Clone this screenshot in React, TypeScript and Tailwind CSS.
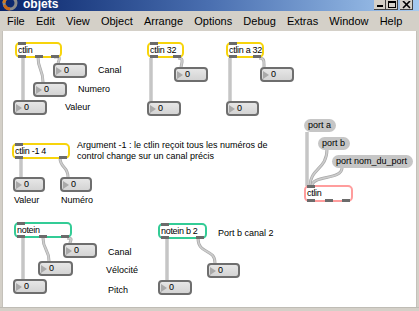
import React from 'react'

// canvas origin in page coordinates
const CX = 3
const CY = 31

const at = (x: number, y: number) => ({ left: x - CX, top: y - CY })

interface ObjProps {
  x: number
  y: number
  w: number
  h?: number
  text: string
  border: string
  outlets: number
}

function ObjBox({ x, y, w, h = 16, text, border, outlets }: ObjProps) {
  const outs = Array.from({ length: outlets }, (_, i) =>
    outlets === 1 ? 3 : 3 + (i * (w - 14)) / (outlets - 1)
  )
  return (
    <div
      className={`absolute flex items-center whitespace-nowrap rounded-[5px] border-2 bg-white pl-[1px] text-[9px] leading-none tracking-[-0.3px] text-black ${border}`}
      style={{ ...at(x, y), width: w, height: h }}
    >
      <span className="absolute left-[1px] top-[-2px] h-[3px] w-[8px] bg-[#6b6b6b]" />
      {outs.map((l, i) => (
        <span
          key={i}
          className="absolute bottom-[-2px] h-[3px] w-[8px] bg-[#6b6b6b]"
          style={{ left: l - 2 }}
        />
      ))}
      <span className="relative">{text}</span>
    </div>
  )
}

function NumBox({ x, y, w = 34 }: { x: number; y: number; w?: number }) {
  return (
    <div
      className="absolute flex items-center rounded-[4px] border-2 border-[#6e6e6e] bg-gradient-to-b from-[#e6e6e6] to-[#d4d4d4] text-[9px] leading-none text-black"
      style={{ ...at(x, y), width: w, height: 15 }}
    >
      <span className="ml-[1px] h-0 w-0 border-y-[4px] border-l-[6px] border-y-transparent border-l-[#a9a9a9]" />
      <span className="ml-[2px]">0</span>
    </div>
  )
}

function Msg({ x, y, w, text }: { x: number; y: number; w: number; text: string }) {
  return (
    <div
      className="absolute flex items-center whitespace-nowrap rounded-full bg-[#c6c6c6] pl-[4px] text-[9px] leading-none text-black"
      style={{ ...at(x, y), width: w, height: 13 }}
    >
      {text}
    </div>
  )
}

function Label({ x, y, text }: { x: number; y: number; text: string }) {
  return (
    <div className="absolute whitespace-nowrap text-[9px] leading-[11px] text-black" style={at(x, y)}>
      {text}
    </div>
  )
}

const cords = [
  // ctlin
  'M23 57 L23 100',
  'M38 57 C38 70 43 69 43 82',
  'M54 57 C62 56 59 60 58 63',
  // ctlin 32
  'M151 58 L151 101',
  'M178 58 C184 58 182 62 181 67',
  // ctlin a 32
  'M230 58 L230 101',
  'M259 58 C265 58 264 62 264 67',
  // ctlin -1 4
  'M21 158 L21 177',
  'M60 158 C60 168 68 166 68 177',
  // notein
  'M23 238 L23 279',
  'M43 238 C43 250 49 249 49 261',
  'M67 238 C74 238 70 241 70 243',
  // notein b 2
  'M167 238 L167 280',
  'M198 238 C198 255 215 248 215 263',
  // ports
  'M307 132 L307 186',
  'M327 149 C327 170 310 168 310 186',
  'M342 168 C342 180 312 175 312 186',
]

const menu = ['File', 'Edit', 'View', 'Object', 'Arrange', 'Options', 'Debug', 'Extras', 'Window', 'Help']

export default function App() {
  return (
    <div
      className="flex h-[311px] w-[419px] flex-col overflow-hidden bg-[#d4d0c8]"
      style={{ fontFamily: '"Liberation Sans", Arial, sans-serif' }}
    >
      {/* title bar, cropped at the top */}
      <div className="relative flex h-[11px] shrink-0 items-end bg-gradient-to-r from-[#0a246a] via-[#4a6fb0] to-[#a6caf0]">
        <svg className="absolute left-0 top-[-5px]" width="20" height="16" viewBox="0 0 20 16">
          <circle cx="10" cy="8" r="6" fill="none" stroke="#8a8a8a" strokeWidth="3" />
          <path d="M4 8 A6 6 0 0 1 7 3" fill="none" stroke="#d07a20" strokeWidth="3" />
          <path d="M10 14 A6 6 0 0 1 4.5 10" fill="none" stroke="#c86818" strokeWidth="3" />
        </svg>
        <span className="absolute left-[23px] top-[-1px] text-[12px] font-bold leading-[11px] text-white">objets</span>
        <div className="absolute right-[6px] top-0 flex h-[10px]">
          <div className="relative h-[10px] w-[12px] border-b border-r border-b-[#404040] border-r-[#404040] bg-[#d4d0c8]">
            <span className="absolute bottom-[2px] left-[3px] h-[2px] w-[6px] bg-black" />
          </div>
          <div className="relative h-[10px] w-[12px] border-b border-r border-b-[#404040] border-r-[#404040] bg-[#d4d0c8]">
            <span className="absolute bottom-[1px] left-[2px] h-[7px] w-[8px] border border-t-2 border-black" />
          </div>
          <div className="relative ml-[2px] flex h-[10px] w-[13px] items-end justify-center border-b border-r border-b-[#404040] border-r-[#404040] bg-[#d4d0c8]">
            <svg width="9" height="8" viewBox="0 0 9 8">
              <path d="M1 0 L8 7 M8 0 L1 7" stroke="black" strokeWidth="1.6" />
            </svg>
          </div>
        </div>
      </div>

      {/* menu bar */}
      <div className="flex h-[20px] shrink-0 items-center gap-[11.2px] pl-[7px] text-[11px] leading-none text-black">
        {menu.map((m) => (
          <span key={m}>{m}</span>
        ))}
      </div>

      {/* patcher canvas */}
      <div className="flex min-h-0 flex-1">
        <div className="w-[3px] border-r border-[#c4c1ba]" />
        <div className="relative flex-1 overflow-hidden bg-white">
          <svg className="absolute inset-0" width="413" height="276" viewBox="3 31 413 276">
            {cords.map((d, i) => (
              <g key={i}>
                <path d={d} fill="none" stroke="#a9a9a9" strokeWidth="3" />
                <path d={d} fill="none" stroke="#cdcdcd" strokeWidth="1.6" />
              </g>
            ))}
          </svg>

          {/* ctlin */}
          <ObjBox x={15} y={42} w={47} text="ctlin" border="border-[#f7d40c]" outlets={3} />
          <NumBox x={53} y={63} />
          <Label x={98} y={65} text="Canal" />
          <NumBox x={33} y={82} />
          <Label x={78} y={84} text="Numero" />
          <NumBox x={13} y={100} />
          <Label x={65} y={102} text="Valeur" />

          {/* ctlin 32 */}
          <ObjBox x={147} y={42} w={37} text="ctlin 32" border="border-[#f7d40c]" outlets={2} />
          <NumBox x={174} y={67} />
          <NumBox x={147} y={101} />

          {/* ctlin a 32 */}
          <ObjBox x={226} y={42} w={38} text="ctlin a 32" border="border-[#f7d40c]" outlets={2} />
          <NumBox x={260} y={67} />
          <NumBox x={226} y={101} w={33} />

          {/* ctlin -1 4 */}
          <ObjBox x={12} y={143} w={58} text="ctlin -1 4" border="border-[#f7d40c]" outlets={2} />
          <div className="absolute whitespace-nowrap text-[9px] leading-[11px] text-black" style={at(77, 140)}>
            Argument -1 : le ctlin reçoit tous les numéros de
            <br />
            control change sur un canal précis
          </div>
          <NumBox x={13} y={177} w={32} />
          <NumBox x={60} y={177} w={32} />
          <Label x={14} y={195} text="Valeur" />
          <Label x={61} y={195} text="Numéro" />

          {/* ports */}
          <Msg x={304} y={119} w={32} text="port a" />
          <Msg x={318} y={137} w={32} text="port b" />
          <Msg x={332} y={155} w={81} text="port nom_du_port" />
          <ObjBox x={304} y={185} w={49} h={17} text="ctlin" border="border-[#ff9d9d]" outlets={3} />

          {/* notein */}
          <ObjBox x={14} y={222} w={58} text="notein" border="border-[#33cc96]" outlets={3} />
          <NumBox x={63} y={243} />
          <Label x={108} y={247} text="Canal" />
          <NumBox x={38} y={261} w={35} />
          <Label x={106} y={265} text="Vélocité" />
          <NumBox x={13} y={279} />
          <Label x={108} y={285} text="Pitch" />

          {/* notein b 2 */}
          <ObjBox x={158} y={223} w={49} text="notein b 2" border="border-[#33cc96]" outlets={2} />
          <Label x={218} y={228} text="Port b canal 2" />
          <NumBox x={207} y={263} w={33} />
          <NumBox x={158} y={280} />
        </div>
        <div className="w-[3px] border-l border-[#c4c1ba]" />
      </div>
      <div className="h-[4px] shrink-0 border-t border-[#bfbcb5]" />
    </div>
  )
}
